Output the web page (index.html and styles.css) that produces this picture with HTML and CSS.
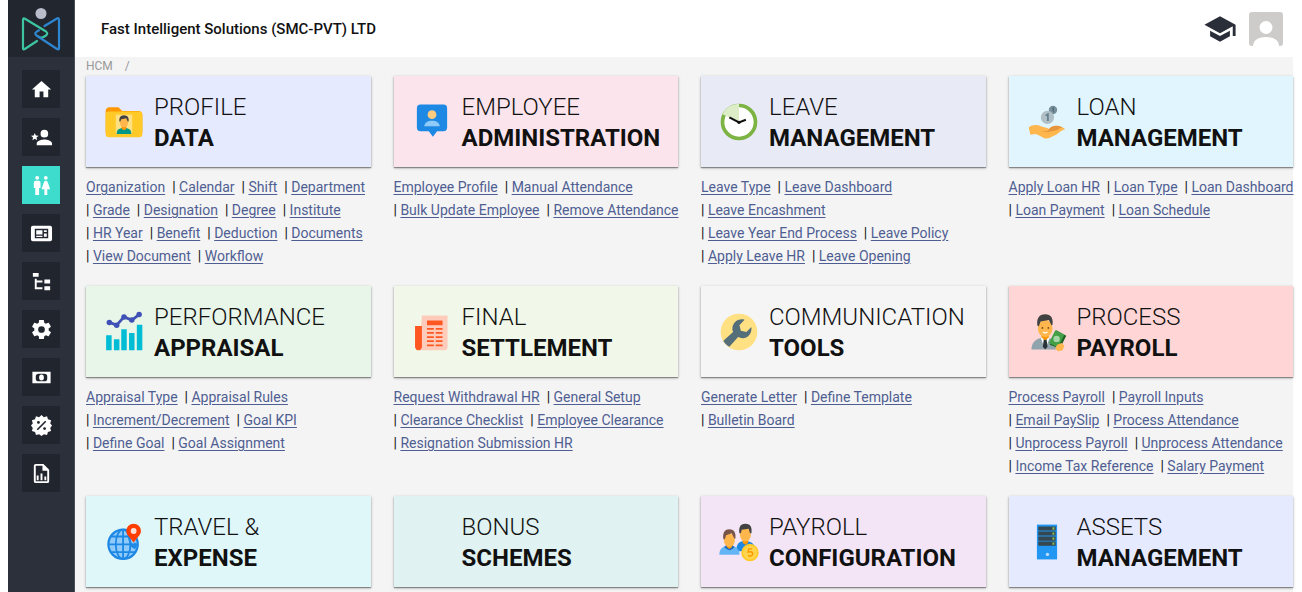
FILE: index.html
```html
<!DOCTYPE html>
<html lang="en">
<head>
<meta charset="utf-8">
<title>HCM</title>
<link rel="stylesheet" href="styles.css">
</head>
<body>
<div class="app">
  <aside class="sidebar">
    <a class="logo" href="#" aria-label="Home page">
      <svg viewBox="0 0 40 44" width="40" height="44" fill="none" stroke-width="2.200" stroke-linecap="round" stroke-linejoin="round">
        <circle cx="20" cy="6.500" r="5.500" fill="#b9bdcb"/>
        <path stroke="#3cc5a0" d="M16 34 3.800 42Q2 43 2 41V13Q2 10.500 4 11.700L25 24.500Q27.500 26.500 25 28.500L22.500 30Q20 31.500 17.500 29.500"/>
        <path stroke="#2f86d0" d="M23.500 19 36 11.500Q38 10.500 38 13V41Q38 43 36 42L15.500 28.500Q13 26.500 15.500 24.800L18 23.300"/>
      </svg>
    </a>
    <nav class="menu" aria-label="Modules">
      <button class="menu-item" type="button" aria-label="Home"><svg class="glyph" viewBox="0 0 24 24"><path d="M10 20v-6h4v6h5v-8h3L12 3 2 12h3v8z"/></svg></button>
      <button class="menu-item" type="button" aria-label="Recruitment"><svg class="glyph" viewBox="0 0 24 24"><path d="M15 14c-2.670 0-8 1.330-8 4v2h16v-2c0-2.670-5.330-4-8-4m0-2a4 4 0 0 0 4-4 4 4 0 0 0-4-4 4 4 0 0 0-4 4 4 4 0 0 0 4 4M5 13.280l2.450 1.490-.65-2.810L9 10.110l-2.890-.25L5 7.190 3.870 9.860 1 10.110l2.180 1.850-.68 2.810z"/></svg></button>
      <button class="menu-item active" type="button" aria-label="HCM" aria-current="page"><svg class="glyph" viewBox="0 0 24 24"><path d="M7.500 2a2 2 0 0 1 2 2 2 2 0 0 1-2 2 2 2 0 0 1-2-2 2 2 0 0 1 2-2M6 7h3a2 2 0 0 1 2 2v5.500H9.500V22h-4v-7.500H4V9a2 2 0 0 1 2-2m10.500-5a2 2 0 0 1 2 2 2 2 0 0 1-2 2 2 2 0 0 1-2-2 2 2 0 0 1 2-2M15 22v-6h-3l2.590-7.590C14.840 7.590 15.600 7 16.500 7s1.660.59 1.910 1.410L21 16h-3v6z"/></svg></button>
      <button class="menu-item" type="button" aria-label="News"><svg class="glyph" viewBox="0 0 24 24"><path fill-rule="evenodd" d="M3 4h18a2 2 0 0 1 2 2v12a2 2 0 0 1-2 2H3a2 2 0 0 1-2-2V6a2 2 0 0 1 2-2zm2 3v10h14V7zm1.500 1.500H13V13H6.500zm8 0h3v2h-3zm0 3.500h3v3.500h-3zm-8 2.300H13v1.300H6.500z"/></svg></button>
      <button class="menu-item" type="button" aria-label="Structure"><svg class="glyph" viewBox="0 0 24 24"><path d="M3 3h6v4H3zm12 7h6v4h-6zm0 7h6v4h-6zm-2-4H7v5h6v2H5V9h2v2h6z"/></svg></button>
      <button class="menu-item" type="button" aria-label="Settings"><svg class="glyph" viewBox="0 0 24 24"><path d="M12 15.500A3.500 3.500 0 0 1 8.500 12 3.500 3.500 0 0 1 12 8.500a3.500 3.500 0 0 1 3.500 3.500 3.500 3.500 0 0 1-3.500 3.500m7.430-2.530c.04-.32.07-.64.07-.97s-.03-.66-.07-1l2.110-1.630c.19-.15.240-.42.120-.64l-2-3.460c-.12-.22-.39-.31-.61-.22l-2.490 1c-.52-.39-1.060-.73-1.690-.98l-.37-2.650A.506.506 0 0 0 14 2h-4c-.25 0-.46.180-.5.420l-.37 2.650c-.63.250-1.170.590-1.690.980l-2.490-1c-.22-.09-.49 0-.61.220l-2 3.460c-.13.220-.07.490.120.640L4.570 11c-.04.340-.07.670-.07 1s.03.650.07.970l-2.110 1.660c-.19.150-.25.420-.12.640l2 3.460c.12.220.390.300.610.220l2.490-1.010c.52.400 1.060.740 1.690.990l.37 2.650c.04.240.250.420.500.420h4c.25 0 .46-.18.500-.42l.37-2.650c.63-.26 1.170-.59 1.690-.99l2.490 1.010c.22.080.490 0 .610-.22l2-3.460c.12-.22.070-.49-.12-.64z"/></svg></button>
      <button class="menu-item" type="button" aria-label="Payroll"><svg class="glyph" viewBox="0 0 24 24"><path fill-rule="evenodd" d="M2.500 6h19v12h-19zm6.500 2a3 3 0 0 0-3 3v2a3 3 0 0 0 3 3h6a3 3 0 0 0 3-3v-2a3 3 0 0 0-3-3zm3 .8a2.500 3.200 0 0 1 0 6.400 2.500 3.200 0 0 1 0-6.400z"/></svg></button>
      <button class="menu-item" type="button" aria-label="Deductions"><svg class="glyph" viewBox="0 0 24 24"><path fill-rule="evenodd" d="M12 1l2.500 2.300 3.300-1 .9 3.300 3.300.9-.9 3.300L23 12l-1.900 2.500.9 3.300-3.300.9-.9 3.300-3.300-.9L12 23l-2.500-1.900-3.300.9-.9-3.300-3.300-.9.900-3.300L1 12l1.900-2.200L2 6.500l3.300-.9.900-3.300 3.300 1zM8.800 7.300a1.500 1.500 0 1 0 0 3 1.500 1.500 0 1 0 0-3zm6.400 6.400a1.500 1.500 0 1 0 0 3 1.500 1.500 0 1 0 0-3zM15.800 7 7 15.800 8.200 17 17 8.200z"/></svg></button>
      <button class="menu-item" type="button" aria-label="Reports"><svg class="glyph" viewBox="0 0 24 24"><path fill-rule="evenodd" d="M6 2h8l6 6v12a2 2 0 0 1-2 2H6a2 2 0 0 1-2-2V4a2 2 0 0 1 2-2zm0 2v16h12V9h-5V4zm1 10h2v5H7zm4-2h2v7h-2zm4 3h2v4h-2z"/></svg></button>
    </nav>
  </aside>

  <div class="page">
    <header class="topbar">
      <h1 class="company">Fast Intelligent Solutions (SMC-PVT) LTD</h1>
      <button class="icon-button" type="button" aria-label="Training"><svg viewBox="0 0 24 24" width="34" height="34" fill="#2a2e39"><path d="M12 3 1 9l11 6 9-4.910V17h2V9M5 13.180v4L12 21l7-3.820v-4L12 17z"/></svg></button>
      <button class="icon-button" type="button" aria-label="Account"><svg viewBox="0 0 34 34" width="34" height="34"><rect width="34" height="34" rx="3" fill="#cdcccb"/><circle cx="17" cy="15.500" r="6.500" fill="#fff"/><path fill="#fff" d="M4 34c0-6 6-9 13-9s13 3 13 9z"/></svg></button>
    </header>

    <main class="content">
      <nav class="crumbs" aria-label="Breadcrumb"><span>HCM</span><span>/</span></nav>
      <div class="modules">

        <section class="module">
          <h2 class="card lavender">
            <svg class="pic" viewBox="0 0 48 48"><path fill="#ff9800" d="M40 12H22l-4-4H8c-2.200 0-4 1.800-4 4v24h40V16c0-2.200-1.800-4-4-4z"/><rect x="4" y="12.500" width="40" height="28" rx="3.500" fill="#ffca28"/><path fill="#ffe082" d="M15 16h18v21H15z"/><path fill="#009688" d="M16 37c0-5 3-6.500 8-6.500s8 1.500 8 6.500z"/><path fill="#ff9800" d="M21.500 28h5v3.500l-2.500 1.500-2.500-1.500z"/><ellipse cx="24" cy="24.500" rx="4.500" ry="5.500" fill="#ffb74d"/><path fill="#424242" d="M24 16.500c-4 0-5.500 3-5 7h1l1-2.500 5.500-1 1.500 3.500h1c.8-4-1-7-5-7z"/></svg>
            <span class="title"><span class="light">PROFILE</span><span class="strong">DATA</span></span>
          </h2>
          <ul class="links"><li><a href="#">Organization</a></li><li><a href="#">Calendar</a></li><li><a href="#">Shift</a></li><li><a href="#">Department</a></li><li><a href="#">Grade</a></li><li><a href="#">Designation</a></li><li><a href="#">Degree</a></li><li><a href="#">Institute</a></li><li><a href="#">HR Year</a></li><li><a href="#">Benefit</a></li><li><a href="#">Deduction</a></li><li><a href="#">Documents</a></li><li><a href="#">View Document</a></li><li><a href="#">Workflow</a></li></ul>
        </section>

        <section class="module">
          <h2 class="card pink">
            <svg class="pic" viewBox="0 0 48 48"><path fill="#1e88e5" d="M11.500 5h25a4 4 0 0 1 4 4v21a4 4 0 0 1-4 4h-7L25 40l-4.500-6h-9a4 4 0 0 1-4-4V9a4 4 0 0 1 4-4z"/><circle cx="24" cy="16" r="4.800" fill="#ffcc80"/><path fill="#90caf9" d="M15.500 28.500c.5-4 4-6 8.500-6s8 2 8.500 6z"/></svg>
            <span class="title"><span class="light">EMPLOYEE</span><span class="strong">ADMINISTRATION</span></span>
          </h2>
          <ul class="links wide"><li><a href="#">Employee Profile</a></li><li><a href="#">Manual Attendance</a></li><li><a href="#">Bulk Update Employee</a></li><li><a href="#">Remove Attendance</a></li></ul>
        </section>

        <section class="module">
          <h2 class="card slate">
            <svg class="pic" viewBox="0 0 48 48"><circle cx="24" cy="24" r="18" fill="#fff" stroke="#7cb342" stroke-width="4"/><path fill="#dcedc8" d="M24 24V4A20 20 0 0 0 6 15.500z"/><path fill="none" stroke="#111" stroke-width="2.200" d="m13.500 19 10.500 5.500 7.500-3"/><circle cx="24" cy="24.300" r="1.800" fill="#111"/></svg>
            <span class="title"><span class="light">LEAVE</span><span class="strong">MANAGEMENT</span></span>
          </h2>
          <ul class="links"><li><a href="#">Leave Type</a></li><li><a href="#">Leave Dashboard</a></li><li><a href="#">Leave Encashment</a></li><li><a href="#">Leave Year End Process</a></li><li><a href="#">Leave Policy</a></li><li><a href="#">Apply Leave HR</a></li><li><a href="#">Leave Opening</a></li></ul>
        </section>

        <section class="module">
          <h2 class="card sky">
            <svg class="pic" viewBox="0 0 48 48"><circle cx="30.500" cy="11" r="4.600" fill="#78909c"/><path fill="none" stroke="#546e7a" stroke-width="1.400" d="m29.500 9.500 1.500-1v5"/><circle cx="24.500" cy="19" r="7.200" fill="#b0bec5"/><path fill="none" stroke="#607d8b" stroke-width="1.800" d="m22.500 17 2.500-1.500v7.500"/><path fill="#ffb74d" d="M4 30c4-3 9-3.500 14-1 2 1 6 .8 8 2.500 4-4 9-4.500 14-2l4 2.500c-5 1-7 4-10 6-4 1-7 4.500-11 4-5-1-8-4.500-12-5-3 0-4 1-5 1z"/><path fill="#e6953f" d="M26 31.500c4-4 9-4.500 14-2l1 .6c-4 .2-5 3.400-9 3.400-3 0-6 2-10 1.500l-5-1.500c4 .6 9 1.500 9-2z"/></svg>
            <span class="title"><span class="light">LOAN</span><span class="strong">MANAGEMENT</span></span>
          </h2>
          <ul class="links wide"><li><a href="#">Apply Loan HR</a></li><li><a href="#">Loan Type</a></li><li><a href="#">Loan Dashboard</a></li><li><a href="#">Loan Payment</a></li><li><a href="#">Loan Schedule</a></li></ul>
        </section>

        <section class="module">
          <h2 class="card mint">
            <svg class="pic" viewBox="0 0 48 48"><path fill="#00bcd4" d="M4.500 27.500h6V44h-6zM13 32h6v12h-6zM21 21h6v23h-6zM29.500 25h6v19h-6zM38 16h6v28h-6z"/><path fill="none" stroke="#3f51b5" stroke-width="3" d="m8 13.500 8 3 8-9 8.500 3.500 8-6"/><g fill="#3f51b5"><circle cx="8" cy="13.500" r="3"/><circle cx="16" cy="16.500" r="3"/><circle cx="24" cy="7.500" r="3"/><circle cx="32.500" cy="11" r="3"/><circle cx="40.500" cy="5" r="3"/></g></svg>
            <span class="title"><span class="light">PERFORMANCE</span><span class="strong">APPRAISAL</span></span>
          </h2>
          <ul class="links"><li><a href="#">Appraisal Type</a></li><li><a href="#">Appraisal Rules</a></li><li><a href="#">Increment/Decrement</a></li><li><a href="#">Goal KPI</a></li><li><a href="#">Define Goal</a></li><li><a href="#">Goal Assignment</a></li></ul>
        </section>

        <section class="module">
          <h2 class="card lime">
            <svg class="pic" viewBox="0 0 48 48"><path fill="#ffccbc" d="M13 6h28v34a4 4 0 0 1-4 4H10z"/><path fill="#ff5722" d="M5.500 17.500H13V41q-1 3-3.800 3t-3.700-3zM18.500 11.500h17v5h-17zM18.500 19.500h7.500v2h-7.500zm9.500 0h7.500v2H28zM18.500 24h7.500v2h-7.500zm9.500 0h7.500v2H28zM18.500 28.500h7.500v2h-7.500zm9.500 0h7.500v2H28zM18.500 33h7.500v2h-7.500zm9.500 0h7.500v2H28zM18.500 37.500h7.500v2h-7.500zm9.500 0h7.500v2H28z"/></svg>
            <span class="title"><span class="light">FINAL</span><span class="strong">SETTLEMENT</span></span>
          </h2>
          <ul class="links"><li><a href="#">Request Withdrawal HR</a></li><li><a href="#">General Setup</a></li><li><a href="#">Clearance Checklist</a></li><li><a href="#">Employee Clearance</a></li><li><a href="#">Resignation Submission HR</a></li></ul>
        </section>

        <section class="module">
          <h2 class="card plain">
            <svg class="pic" viewBox="0 0 48 48"><circle cx="24" cy="24" r="20" fill="#ffe082"/><path fill="#546e7a" d="M37.500 18.500c.7 6-2.500 11-7.500 12-2.500.5-5 0-7-1L13.500 40c-3-1.500-5.500-4-6.500-6.500l10.500-9.500c-2-5 .5-11 5.500-13 2.500-1 5-1 7-.3l-5.500 6 1.500 6 6 1.300z"/></svg>
            <span class="title"><span class="light">COMMUNICATION</span><span class="strong">TOOLS</span></span>
          </h2>
          <ul class="links"><li><a href="#">Generate Letter</a></li><li><a href="#">Define Template</a></li><li><a href="#">Bulletin Board</a></li></ul>
        </section>

        <section class="module">
          <h2 class="card rose">
            <svg class="pic" viewBox="0 0 48 48"><path fill="#90a4ae" d="M7 43c.5-8 4.500-12 15-13.500C32 31 36 35 36 43z"/><path fill="#fff" d="m17 30 5 13 5-13z"/><path fill="#263238" d="m20.500 32 1.500-1 1.500 1 1 8-2.500 3-2.500-3z"/><path fill="#ff9800" d="M18 26h8v4l-4 3-4-3z"/><ellipse cx="22" cy="20" rx="8" ry="9.500" fill="#ffb74d"/><path fill="#424242" d="M22 4.500c-7 0-9.500 5-8.500 12.500l1.500 1 2-5.500 9-1.500 3 6 1-1c1-7-1.500-11.500-8-11.500z"/><circle cx="19" cy="19.500" r="1" fill="#784719"/><circle cx="25.500" cy="19.500" r="1" fill="#784719"/><path fill="none" stroke="#fff" stroke-width="1.300" d="M19.500 24q2.500 2 5 0"/><path fill="#1b5e20" d="m34 22 11 6-7 14-11-4z"/><path fill="#43a047" d="m33 22 10 5-7 14-10-5z"/><circle cx="34.500" cy="31.500" r="3.500" fill="#a5d6a7"/><path fill="#ffb74d" d="m35 38 5-2 3 3-2 5-5 1-3-3z"/></svg>
            <span class="title"><span class="light">PROCESS</span><span class="strong">PAYROLL</span></span>
          </h2>
          <ul class="links"><li><a href="#">Process Payroll</a></li><li><a href="#">Payroll Inputs</a></li><li><a href="#">Email PaySlip</a></li><li><a href="#">Process Attendance</a></li><li><a href="#">Unprocess Payroll</a></li><li><a href="#">Unprocess Attendance</a></li><li><a href="#">Income Tax Reference</a></li><li><a href="#">Salary Payment</a></li></ul>
        </section>

        <section class="module">
          <h2 class="card aqua">
            <svg class="pic" viewBox="0 0 48 48"><circle cx="23" cy="26.500" r="16" fill="#90caf9" stroke="#1e88e5" stroke-width="2.500"/><g fill="none" stroke="#1e88e5" stroke-width="2"><ellipse cx="23" cy="26.500" rx="8" ry="16"/><path d="M23 10v33M7 26.500h32M10 18h26M10 35h26"/></g><path fill="#1e88e5" d="m27 15 7 13 2-4 2 4-2 4-5-3z"/><path fill="#ff3d00" d="M34.500 4a8 8 0 0 1 8 8c0 4-4 7-8 12.500C30.500 19 26.500 16 26.500 12a8 8 0 0 1 8-8z"/><circle cx="34.500" cy="12" r="3.200" fill="#ffe0d8"/></svg>
            <span class="title"><span class="light">TRAVEL &amp;</span><span class="strong">EXPENSE</span></span>
          </h2>
        </section>

        <section class="module">
          <h2 class="card teal">
            <span class="pic"></span>
            <span class="title"><span class="light">BONUS</span><span class="strong">SCHEMES</span></span>
          </h2>
        </section>

        <section class="module">
          <h2 class="card violet">
            <svg class="pic" viewBox="0 0 48 48"><path fill="#1e88e5" d="M21 34c0-8 3-11 10-11s11 4 11 11z"/><path fill="#ff9800" d="M28 21h6v4l-3 2-3-2z"/><ellipse cx="31" cy="16" rx="6" ry="7.500" fill="#ffb74d"/><path fill="#424242" d="M31 4c-6 0-7.500 4.500-6.500 10.500h1.500l1-4 7.500-1 1.500 5h1.500C38.500 8.500 37 4 31 4z"/><path fill="#64b5f6" d="M2.500 38c0-7 4-10 11-10s11 3 11 10z"/><path fill="#1565c0" d="M8 29.500q6 7 11 0l-2-2h-7z"/><path fill="#ff9800" d="M10.500 26h6v3.500l-3 2-3-2z"/><ellipse cx="13.500" cy="22" rx="6" ry="7.500" fill="#ffb74d"/><path fill="#795548" d="M13.500 10C7.500 10 6 15 7 21h1.500l1.500-4.500 6-2 3 6h1c1-6-1-10.500-6.500-10.500z"/><circle cx="36" cy="35.500" r="8.500" fill="#ffd54f" stroke="#ffca28" stroke-width="2"/><path fill="none" stroke="#ff9800" stroke-width="1.600" d="M38.500 31.500h-4l-.5 3.500c3-1 5 0 5 2s-3 3-5 1.500"/></svg>
            <span class="title"><span class="light">PAYROLL</span><span class="strong">CONFIGURATION</span></span>
          </h2>
        </section>

        <section class="module">
          <h2 class="card lavender">
            <svg class="pic" viewBox="0 0 48 48"><path fill="#2196f3" d="M13 5h22v38H13z"/><path fill="#37474f" d="M14.500 7h19v4.500h-19zm0 5.500h19V17h-19zm0 5.500h19v4.500h-19zm0 5.500h19V28h-19z"/><path fill="#8bc34a" d="M30 8h2v2.500h-2zm0 5.500h2V16h-2zm0 5.500h2v2.500h-2zm0 5.500h2V27h-2z"/><circle cx="24.500" cy="37.500" r="1.900" fill="#bbdefb"/></svg>
            <span class="title"><span class="light">ASSETS</span><span class="strong">MANAGEMENT</span></span>
          </h2>
        </section>

      </div>
    </main>
  </div>
</div>
</body>
</html>
```
FILE: styles.css
```css
* {
  box-sizing: border-box;
}

body {
  margin: 0;
  background: #fff;
  font-family: Roboto, "Liberation Sans", sans-serif;
  color: #111;
}

button {
  border: 0;
  padding: 0;
  background: none;
  cursor: pointer;
}

svg {
  display: block;
}

.app {
  display: flex;
  min-height: 100vh;
  padding: 0 9px 0 8px;
}

.sidebar {
  flex: none;
  width: 67px;
  border-right: 1px solid #4a4d57;
  background: #2c303b;
}

.logo {
  display: flex;
  justify-content: center;
  padding: 7px 0 6px;
  background: #22262f;
}

.menu {
  display: flex;
  flex-direction: column;
  align-items: center;
  gap: 10px;
  padding-top: 13px;
}

.menu-item {
  display: grid;
  place-items: center;
  width: 38px;
  height: 38px;
  background: #20252e;
}

.menu-item.active {
  background: #3edccd;
}

.glyph {
  width: 23px;
  height: 23px;
  fill: #fff;
}

.page {
  flex: 1;
  min-width: 0;
  display: flex;
  flex-direction: column;
}

.topbar {
  display: flex;
  align-items: center;
  gap: 12px;
  height: 57px;
  padding: 0 10px 0 26px;
  background: #fff;
}

.company {
  flex: 1;
  margin: 0;
  font-size: 15px;
  font-weight: 500;
}

.content {
  flex: 1;
  padding: 0 0 4px 11px;
  background: #f4f4f4;
}

.crumbs {
  display: flex;
  gap: 12px;
  font-size: 12px;
  line-height: 19px;
  color: #999;
}

.modules {
  display: grid;
  grid-template-columns: repeat(4, minmax(0, 1fr));
  gap: 18px 23px;
}

.card {
  display: flex;
  align-items: center;
  gap: 8px;
  margin: 0;
  padding: 16px 16px 13px;
  box-shadow: 0 1px 3px rgba(0, 0, 0, 0.25), 0 1px 1px rgba(0, 0, 0, 0.35);
}

.lavender { background: #e6eaff; }
.pink { background: #fbe4ec; }
.slate { background: #e8eaf6; }
.sky { background: #e1f5fe; }
.mint { background: #e8f5e9; }
.lime { background: #f1f8e9; }
.plain { background: #f5f5f5; }
.rose { background: #ffd5d5; }
.aqua { background: #e0f7fa; }
.teal { background: #e0f2f1; }
.violet { background: #f3e5f5; }

.pic {
  flex: none;
  width: 44px;
  height: 44px;
  margin-bottom: 3px;
}

.title {
  display: flex;
  flex-direction: column;
  font-size: 24px;
  line-height: 31px;
  white-space: nowrap;
}

.light {
  font-weight: 300;
}

.strong {
  font-weight: 700;
}

.links {
  display: flex;
  flex-wrap: wrap;
  column-gap: 7px;
  margin: 9px 0 0;
  padding: 0;
  list-style: none;
  font-size: 14px;
  line-height: 23px;
  white-space: nowrap;
}

.links.wide {
  margin-right: -6px;
}

.links li + li::before {
  content: "| ";
}

.links a {
  color: #4f5e92;
  text-underline-offset: 2px;
}
```
